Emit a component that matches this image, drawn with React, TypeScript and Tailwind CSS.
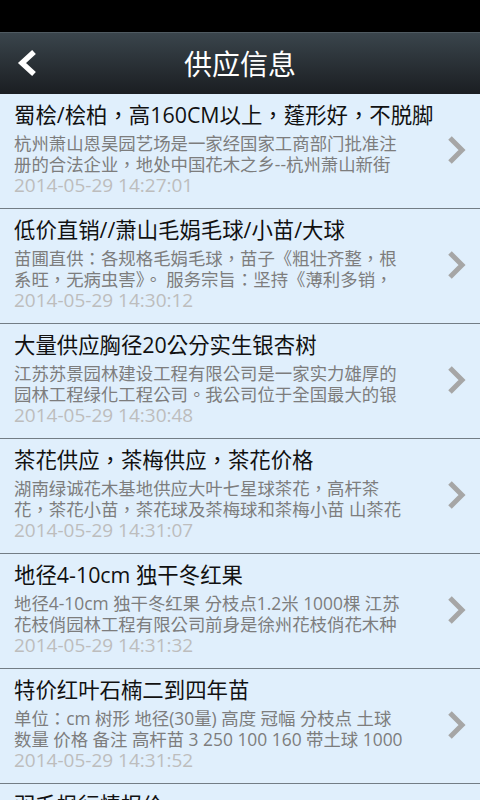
const items = [
  {
    title: '蜀桧/桧柏，高160CM以上，蓬形好，不脱脚',
    lines: ['杭州萧山恩昊园艺场是一家经国家工商部门批准注', '册的合法企业，地处中国花木之乡--杭州萧山新街'],
    date: '2014-05-29 14:27:01',
  },
  {
    title: '低价直销//萧山毛娟毛球/小苗/大球',
    lines: ['苗圃直供：各规格毛娟毛球，苗子《粗壮齐整，根', '系旺，无病虫害》。 服务宗旨：坚持《薄利多销，'],
    date: '2014-05-29 14:30:12',
  },
  {
    title: '大量供应胸径20公分实生银杏树',
    lines: ['江苏苏景园林建设工程有限公司是一家实力雄厚的', '园林工程绿化工程公司。我公司位于全国最大的银'],
    date: '2014-05-29 14:30:48',
  },
  {
    title: '茶花供应，茶梅供应，茶花价格',
    lines: ['湖南绿诚花木基地供应大叶七星球茶花，高杆茶', '花，茶花小苗，茶花球及茶梅球和茶梅小苗 山茶花'],
    date: '2014-05-29 14:31:07',
  },
  {
    title: '地径4-10cm 独干冬红果',
    lines: ['地径4-10cm 独干冬红果 分枝点1.2米 1000棵 江苏', '花枝俏园林工程有限公司前身是徐州花枝俏花木种'],
    date: '2014-05-29 14:31:32',
  },
  {
    title: '特价红叶石楠二到四年苗',
    lines: ['单位：cm 树形 地径(30量) 高度 冠幅 分枝点 土球', '数量 价格 备注 高杆苗 3 250 100 160 带土球 1000'],
    date: '2014-05-29 14:31:52',
  },
  {
    title: '羽毛枫行情报价',
    lines: [],
    date: '',
  },
]

// TC face centres the full-width commas, like the device font in the shot
const font = { fontFamily: '"Open Sans", "Noto Sans CJK TC", "Noto Sans CJK SC", sans-serif' }

function Row({ item }: { item: (typeof items)[number] }) {
  return (
    <div className="flex h-[115px] shrink-0 items-center border-b border-[#737d85] pl-[14px] pr-[12px]">
      <div className="min-w-0 flex-1 self-start pt-[8px]">
        <p className="whitespace-nowrap text-[21.4px] leading-[26px] text-[#111]">{item.title}</p>
        <div className="mt-[5px] text-[17.4px] leading-[21px] text-[#7d7d7d]">
          {item.lines.map((l, i) => (
            <p key={i} className="whitespace-nowrap">{l}</p>
          ))}
        </div>
        {item.date && <p className="text-[19px] leading-[21px] text-[#bdbdbd]">{item.date}</p>}
      </div>
      <svg width="24" height="30" viewBox="0 0 24 30" className="-mt-[2px] shrink-0">
        <polyline points="6,3 18,15 6,27" fill="none" stroke="#a6a6a6" strokeWidth="5" strokeLinejoin="miter" />
      </svg>
    </div>
  )
}

export default function App() {
  return (
    <div className="flex h-[800px] w-[480px] flex-col overflow-hidden bg-[#e0effc]" style={font}>
      <div className="h-[32px] shrink-0 bg-black" />
      <div className="relative flex h-[62px] shrink-0 items-center justify-center border-t border-[#4f5a61] bg-gradient-to-b from-[#3a454c] to-[#1b1e22]">
        <svg width="26" height="30" viewBox="0 0 26 30" className="absolute left-[15px] top-[15px]">
          <polyline points="19,4 7,15 19,26" fill="none" stroke="#fff" strokeWidth="5.5" strokeLinejoin="miter" />
        </svg>
        <h1 className="text-[28px] leading-[34px] text-white">供应信息</h1>
      </div>
      <div className="flex flex-col">
        {items.map((it, i) => (
          <Row key={i} item={it} />
        ))}
      </div>
    </div>
  )
}
